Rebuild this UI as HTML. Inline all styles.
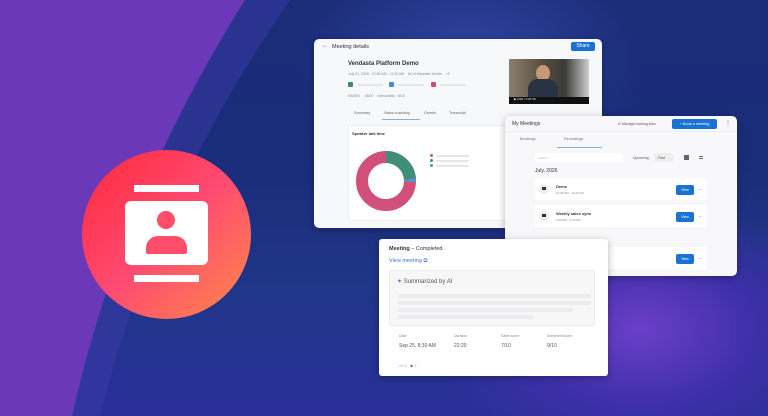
<!DOCTYPE html>
<html><head><style>
*{margin:0;padding:0;box-sizing:border-box}
body{width:768px;height:416px;overflow:hidden;font-family:"Liberation Sans",sans-serif;position:relative;background:#1c2a78}
.abs{position:absolute}
.bg{position:absolute;inset:0;background:radial-gradient(ellipse 260px 170px at 640px 330px,#6a3fc8 0%,#3d2fa8 45%,transparent 80%),radial-gradient(ellipse 250px 160px at 470px 60px,#2f45a0 0%,transparent 70%),linear-gradient(180deg,#1b2c78 0%,#1a2d7a 40%,#203688 70%,#2a2f9a 100%)}
.purple{position:absolute;inset:0}
.panel{position:absolute;background:#fff;border-radius:5px;box-shadow:0 2px 8px rgba(0,0,0,.3)}
.t{position:absolute;white-space:nowrap;color:#333}
.bar{position:absolute;background:#e6e6e8;border-radius:2px}
.btn{position:absolute;background:#1a73d0;border-radius:2px;color:#fff;font-size:5px;text-align:center}
</style></head><body>
<div class="bg"></div>
<svg class="purple" width="768" height="416">
<path d="M0 0 H245 C170 120 110 250 72 416 H0Z" fill="#6a38b9"/>
<path d="M245 0 C170 120 110 250 72 416 H100 C140 260 200 130 290 0Z" fill="#3b3aa8" opacity=".5"/>
</svg>
<div class="abs" style="left:82px;top:150px;width:169px;height:169px;border-radius:50%;background:linear-gradient(135deg,#ff2a3a 0%,#ff4a72 50%,#ff8a4a 100%)"></div>
<div class="abs" style="left:134px;top:185px;width:65px;height:7px;background:#fff"></div>
<div class="abs" style="left:125px;top:201px;width:83px;height:64px;background:#fff;border-radius:6px"></div>
<div class="abs" style="left:157px;top:211px;width:18px;height:18px;border-radius:50%;background:#ff4d6c"></div>
<div class="abs" style="left:146px;top:236px;width:41px;height:18px;border-radius:12px 12px 2px 2px;background:#ff4d6c"></div>
<div class="abs" style="left:134px;top:275px;width:65px;height:7px;background:#fff"></div>

<div class="panel" style="left:314px;top:39px;width:288px;height:189px;background:#f7f8fa">
<div class="t" style="left:8px;top:4px;font-size:6px;color:#555">←</div>
<div class="t" style="left:18px;top:5px;font-size:5.5px">Meeting details</div>
<div class="btn" style="left:257px;top:3px;width:24px;height:9px;line-height:9px">Share</div>
<div class="t" style="left:34px;top:22px;font-size:6px;font-weight:bold">Vendasta Platform Demo</div>
<div class="t" style="left:34px;top:33px;font-size:3.5px;color:#888">July 21, 2025 &nbsp; 10:05 AM - 11:20 AM &nbsp;&nbsp; All of Mountain Media &nbsp;&nbsp; +3</div>
<div class="abs" style="left:34px;top:43px;width:5px;height:5px;background:#3a8a6c;border-radius:1px"></div>
<div class="bar" style="left:43px;top:45px;width:26px;height:2px"></div>
<div class="abs" style="left:75px;top:43px;width:5px;height:5px;background:#4a8ad0;border-radius:1px"></div>
<div class="bar" style="left:84px;top:45px;width:26px;height:2px"></div>
<div class="abs" style="left:117px;top:43px;width:5px;height:5px;background:#d04a70;border-radius:1px"></div>
<div class="bar" style="left:126px;top:45px;width:26px;height:2px"></div>
<div class="t" style="left:34px;top:55px;font-size:3.5px;color:#888">RAVEN &nbsp;&nbsp;&nbsp; 08/20 &nbsp;&nbsp; Interactivity &nbsp; 8/10</div>
<div class="t" style="left:40px;top:72px;font-size:3.8px;color:#666">Summary</div>
<div class="t" style="left:70px;top:72px;font-size:3.8px;color:#666">Sales coaching</div>
<div class="abs" style="left:68px;top:80px;width:38px;height:1px;background:#8ab0d0"></div>
<div class="t" style="left:110px;top:72px;font-size:3.8px;color:#666">Guests</div>
<div class="t" style="left:135px;top:72px;font-size:3.8px;color:#666">Transcript</div>
<div class="abs" style="left:34px;top:86px;width:160px;height:96px;background:#fff;border:1px solid #eee"></div>
<div class="t" style="left:38px;top:92px;font-size:4px;font-weight:bold">Speaker talk time</div>
<svg class="abs" style="left:40px;top:110px" width="64" height="64"><circle cx="32" cy="32" r="24" fill="none" stroke="#d0507a" stroke-width="12"/><path d="M32 8 A24 24 0 0 1 56 30" fill="none" stroke="#3f8f78" stroke-width="12"/><path d="M56 30 A24 24 0 0 1 56 33" fill="none" stroke="#5a8fd0" stroke-width="12"/></svg>
<div class="abs" style="left:116px;top:115px;width:3px;height:3px;border-radius:50%;background:#d0507a"></div>
<div class="bar" style="left:122px;top:116px;width:33px;height:2px"></div>
<div class="abs" style="left:116px;top:120px;width:3px;height:3px;border-radius:50%;background:#3f8f78"></div>
<div class="bar" style="left:122px;top:121px;width:33px;height:2px"></div>
<div class="abs" style="left:116px;top:125px;width:3px;height:3px;border-radius:50%;background:#5a8fd0"></div>
<div class="bar" style="left:122px;top:126px;width:33px;height:2px"></div>
<div class="abs" style="left:195px;top:20px;width:80px;height:45px;background:linear-gradient(90deg,#8a8070,#5a5040 40%,#3a3a38 70%,#cfcfcf);border-radius:1px"></div>
<div class="abs" style="left:222px;top:26px;width:14px;height:16px;border-radius:50%;background:#c89878"></div>
<div class="abs" style="left:214px;top:40px;width:30px;height:20px;border-radius:10px 10px 0 0;background:#2a3344"></div>
<div class="abs" style="left:195px;top:58px;width:80px;height:7px;background:#111"></div>
<div class="t" style="left:200px;top:58px;font-size:3px;color:#fff">▶ 0:00 / 1:27:46</div>
</div>

<div class="panel" style="left:505px;top:116px;width:232px;height:160px;background:#f8f8fa">
<div class="t" style="left:7px;top:5px;font-size:5px">My Meetings</div>
<div class="t" style="left:113px;top:6px;font-size:3.5px;color:#555">⊖ Manage booking links</div>
<div class="btn" style="left:167px;top:3px;width:45px;height:10px;line-height:10px;font-size:3.8px">+ Book a meeting</div>
<div class="t" style="left:220px;top:4px;font-size:6px;color:#555">⋮</div>
<div class="abs" style="left:0;top:15px;width:232px;height:1px;background:#eee"></div>
<div class="t" style="left:15px;top:21px;font-size:3.8px;color:#777">Bookings</div>
<div class="t" style="left:59px;top:21px;font-size:3.8px;color:#777">Recordings</div>
<div class="abs" style="left:52px;top:31px;width:45px;height:1px;background:#8ab0d0"></div>
<div class="abs" style="left:30px;top:37px;width:88px;height:9px;background:#fff;border-radius:2px"></div>
<div class="t" style="left:33px;top:40px;font-size:3px;color:#bbb">Search</div>
<div class="t" style="left:128px;top:40px;font-size:3.5px;color:#555">Upcoming</div>
<div class="abs" style="left:149px;top:37px;width:19px;height:9px;background:#eee;border-radius:2px"></div>
<div class="t" style="left:153px;top:40px;font-size:3.5px;color:#555">Past</div>
<div class="abs" style="left:179px;top:39px;width:5px;height:5px;background:#666"></div>
<div class="abs" style="left:194px;top:40px;width:4px;height:3px;border-top:1px solid #666;border-bottom:1px solid #666"></div>
<div class="t" style="left:30px;top:52px;font-size:5px">July, 2026</div>
<div class="abs" style="left:30px;top:62px;width:171px;height:22px;background:#fff"></div>
<div class="abs" style="left:34px;top:68px;width:10px;height:10px;border-radius:50%;background:#eee"></div>
<div class="abs" style="left:37px;top:71px;width:4px;height:3px;background:#333"></div>
<div class="t" style="left:51px;top:68px;font-size:4px;font-weight:bold">Demo</div>
<div class="t" style="left:51px;top:75px;font-size:3px;color:#888">10:05 AM - 11:20 AM</div>
<div class="btn" style="left:171px;top:69px;width:18px;height:10px;line-height:10px;font-size:3.5px">View</div>
<div class="t" style="left:193px;top:70px;font-size:4px;color:#666">⌄</div>
<div class="abs" style="left:30px;top:89px;width:171px;height:22px;background:#fff"></div>
<div class="abs" style="left:34px;top:95px;width:10px;height:10px;border-radius:50%;background:#eee"></div>
<div class="abs" style="left:37px;top:98px;width:4px;height:3px;background:#333"></div>
<div class="t" style="left:51px;top:95px;font-size:4px;font-weight:bold">Weekly sales sync</div>
<div class="t" style="left:51px;top:102px;font-size:3px;color:#888">9:30 AM - 9:44 AM</div>
<div class="btn" style="left:171px;top:96px;width:18px;height:10px;line-height:10px;font-size:3.5px">View</div>
<div class="t" style="left:193px;top:97px;font-size:4px;color:#666">⌄</div>
<div class="abs" style="left:30px;top:131px;width:171px;height:22px;background:#fff"></div>
<div class="btn" style="left:171px;top:138px;width:18px;height:10px;line-height:10px;font-size:3.5px">View</div>
<div class="t" style="left:193px;top:139px;font-size:4px;color:#666">⌄</div>
</div>

<div class="panel" style="left:379px;top:239px;width:229px;height:137px;border-radius:3px">
<div class="t" style="left:10px;top:7px;font-size:5.5px;color:#333"><b>Meeting</b> – Completed</div>
<div class="t" style="left:10px;top:19px;font-size:5.5px;color:#3a7ad0">View meeting ⧉</div>
<div class="abs" style="left:10px;top:31px;width:206px;height:56px;background:#f7f7f8;border:1px solid #eee;border-radius:2px"></div>
<div class="t" style="left:18px;top:39px;font-size:6px;color:#555"><span style="color:#7a4fd8">✦</span> Summarized by AI</div>
<div class="bar" style="left:19px;top:55px;width:193px;height:4px;background:#ececee"></div>
<div class="bar" style="left:19px;top:62px;width:193px;height:4px;background:#ececee"></div>
<div class="bar" style="left:19px;top:69px;width:175px;height:4px;background:#ececee"></div>
<div class="bar" style="left:19px;top:76px;width:135px;height:4px;background:#ececee"></div>
<div class="t" style="left:20px;top:95px;font-size:3.5px;color:#888">Date</div>
<div class="t" style="left:20px;top:104px;font-size:5px;color:#555">Sep 25, 8:30 AM</div>
<div class="t" style="left:75px;top:95px;font-size:3.5px;color:#888">Duration</div>
<div class="t" style="left:75px;top:104px;font-size:5px;color:#555">22:20</div>
<div class="t" style="left:122px;top:95px;font-size:3.5px;color:#888">Sales score</div>
<div class="t" style="left:122px;top:104px;font-size:5px;color:#555">7/10</div>
<div class="t" style="left:168px;top:95px;font-size:3.5px;color:#888">Sentiment score</div>
<div class="t" style="left:168px;top:104px;font-size:5px;color:#555">9/10</div>
<div class="t" style="left:20px;top:124px;font-size:4px;color:#aaa">ᯅ 5 &nbsp; <span style="color:#777">◆</span> 2</div>
</div>
</body></html>
